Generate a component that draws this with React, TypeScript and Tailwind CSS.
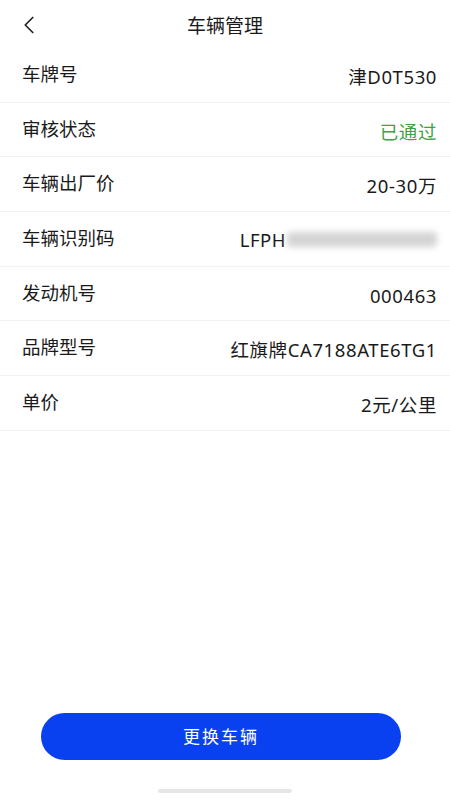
import { ChevronLeft } from 'lucide-react'

const FONT = { fontFamily: '"Noto Sans", "Noto Sans CJK SC", sans-serif' }

type Row = { label: string; value?: string; green?: boolean; vin?: boolean }

const ROWS: Row[] = [
  { label: '车牌号', value: '津D0T530' },
  { label: '审核状态', value: '已通过', green: true },
  { label: '车辆出厂价', value: '20-30万' },
  { label: '车辆识别码', vin: true },
  { label: '发动机号', value: '000463' },
  { label: '品牌型号', value: '红旗牌CA7188ATE6TG1' },
  { label: '单价', value: '2元/公里' },
]

export default function App() {
  return (
    <div className="w-[450px] h-[800px] bg-white flex flex-col text-[#1a1a1a]" style={FONT}>
      <div className="h-[48px] flex items-center relative shrink-0">
        <ChevronLeft className="absolute left-[14px] top-[10px] w-[30px] h-[30px] text-[#222]" strokeWidth={1.4} />
        <div className="flex-1 text-center text-[19px] font-normal pt-[4px]">车辆管理</div>
      </div>

      <div className="flex flex-col">
        {ROWS.map((r) => (
          <div key={r.label} className="h-[54.7px] flex items-center justify-between pl-[22px] pr-[13px] border-b border-[#f3f3f3]">
            <span className="text-[18.5px] -mt-[2px]">{r.label}</span>
            {r.vin ? (
              <span className="flex items-center text-[18.5px] tracking-[0.5px] mt-[2px]">
                LFPH
                <span className="w-[150px] h-[15px] bg-[#d4d4d4] rounded-sm blur-[3px] ml-[1px]" />
              </span>
            ) : (
              <span className={`text-[18.5px] tracking-[0.6px] mt-[4px] ${r.green ? 'text-[#43a047]' : ''}`}>{r.value}</span>
            )}
          </div>
        ))}
      </div>

      <div className="flex-1" />

      <div className="pl-[41px] pb-[29px] shrink-0">
        <button className="w-[360px] h-[47px] rounded-full bg-[#0940f0] text-white text-[17px] tracking-[2px]">
          更换车辆
        </button>
      </div>
      <div className="flex justify-center pb-[7px] shrink-0">
        <div className="w-[134px] h-[4px] rounded-full bg-[#e6e6e6]" />
      </div>
    </div>
  )
}
